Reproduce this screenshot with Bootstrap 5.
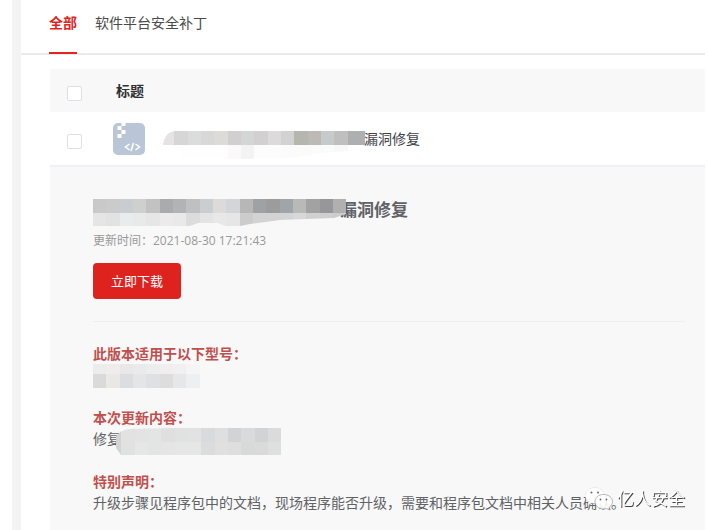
<!DOCTYPE html>
<html lang="zh-CN">
<head>
<meta charset="utf-8">
<meta name="viewport" content="width=device-width, initial-scale=1">
<title>软件平台安全补丁</title>
<link href="https://cdn.jsdelivr.net/npm/bootstrap@5.3.0/dist/css/bootstrap.min.css" rel="stylesheet">
<style>
body { font-family: "Open Sans", "Noto Sans CJK SC", sans-serif; font-size: 14px; line-height: 22px; color: #606266; background: #fff; }
.page-shell { border-left: 9px solid #f3f3f3; margin-left: 12px; margin-right: 3px; }
.page-tabs { gap: 18px; padding-left: 28px; border-bottom: 2px solid #ebebeb; }
.page-tabs .nav-link { padding: 12px 0 18px; margin-bottom: -1px; color: #4a4a4a; border-bottom: 2px solid transparent; }
.page-tabs .nav-link.active { color: #e1251f; font-weight: 700; border-color: #e1251f; }
.patch-area { padding: 14px 0 0 29px; }
.patch-table { margin: 0; color: #404246; --bs-table-bg: transparent; }
.patch-table th, .patch-table td { padding: 0; border: 0; vertical-align: middle; }
.patch-table thead tr { background: #f8f8f8; height: 43px; color: #303133; }
.patch-table tbody tr { height: 54px; border-bottom: 2px solid #f1f1f5; }
.patch-table .pick-col { width: 62px; padding-left: 17px; }
.patch-table .title-head { padding: 1px 0 0 4px; }
.form-check-input.pick { display: block; width: 15px; height: 15px; margin: 5px 0 0; border: 1px solid #dcdfe6; border-radius: 2px; background-color: #fff; }
.veil { display: block; flex: none; position: relative; z-index: 1; }
.row-veil { margin-left: 17px; margin-right: -2px; }
.patch-detail { background: #f8f8f8; padding: 32px 20px 20px 43px; min-height: calc(100vh - 166px); }
.detail-title { height: 24px; font-size: 17px; line-height: 22px; font-weight: 700; margin: 0; }
.detail-title .veil { margin-right: -6px; }
.stamp { font-size: 12px; line-height: 20px; color: #999; margin: 8px 0 12px; }
.download { font-size: 13px; line-height: 20px; color: #fff; background: #de231f; border: 0; border-radius: 4px; padding: 8px 18px; }
.download:hover { background: #c51c19; color: #fff; }
.patch-detail hr { margin: 22px 0; border: 0; border-top: 1px solid #efefef; opacity: 1; }
.section-name { font-size: 14px; line-height: 20px; font-weight: 700; color: #c0504d; margin: 0; }
.fix-veil { margin-left: -5px; }
.section-block { margin-bottom: 20px; }
.models { height: 24px; }
.watermark { position: fixed; right: 23px; bottom: 17px; z-index: 2; font-size: 17px; line-height: 28px; color: #fff; text-shadow: 1px 1px 0 #444; gap: 4px; }
</style>
<script src="https://cdn.jsdelivr.net/npm/bootstrap@5.3.0/dist/js/bootstrap.bundle.min.js"></script>
</head>
<body>
<main class="page-shell">
  <nav class="nav page-tabs">
    <a class="nav-link active" aria-current="page" href="#all">全部</a>
    <a class="nav-link" href="#platform">软件平台安全补丁</a>
  </nav>
  <div class="patch-area" id="all">
    <table class="table patch-table">
      <thead>
        <tr><th class="pick-col"><input class="form-check-input pick" type="checkbox" aria-label="全选"></th><th class="title-head">标题</th></tr>
      </thead>
      <tbody>
        <tr>
          <td class="pick-col"><input class="form-check-input pick" type="checkbox" aria-label="选择补丁"></td>
          <td>
            <div class="d-flex align-items-center">
              <svg width="34" height="34" viewBox="0 0 34 34" aria-hidden="true">
                <rect x="1" y="1" width="32" height="32" rx="5" fill="#bac6d8"/>
                <path fill="#fff" d="M9.500 0h4v4h-4zM5.500 4h4v4h-4zM9.500 8h4v4h-4zM5.500 12h4v4h-4z"/>
                <path d="M17.500 22l-4 3 4 3M23.500 22l4 3-4 3M21.500 21l-2.500 8" fill="none" stroke="#fff" stroke-width="1.500"/>
              </svg>
              <svg class="veil row-veil" width="203" height="46" viewBox="162 116 203 46" aria-hidden="true">
                <clipPath id="rowClip"><path d="M162 145Q164 131 175 131H364V145H348V151L321 153L290 158H254Q240 163 220 158H180V145z"/></clipPath>
                <g clip-path="url(#rowClip)" data-start="160" data-rows="131,14,e6e3e4 d6d6d6 dadddc d8d8d8 dcdbd8 d2cfd1 d4d6d6 d2d0d1 dddadc d1d2d1 b5b6b0 bdbab6 c6caca bfbfc0 adafb1 adafb1;145,14,ffffff fefefe fefefe fefefe fefefe fbf9fa f3f3f3 fcfcfc fcfcfc fafbfa fbfbfa fbfbfb fafbfb f8f8f8 ffffff"></g>
              </svg>
              <span>漏洞修复</span>
            </div>
          </td>
        </tr>
      </tbody>
    </table>
    <section class="patch-detail">
      <h2 class="detail-title d-flex">
        <svg class="veil" width="253" height="28" viewBox="93 198 253 28" aria-hidden="true">
          <clipPath id="headClip"><path d="M93 198H346V213L334 217L280 219L250 223L240 225H225L218 222H198L190 225H93z"/></clipPath>
          <g clip-path="url(#headClip)" data-start="93" data-rows="198,14,c9c9c9 cbcbcb c9ccd0 cfcfcf c2c2c2 aaabad b2b3b5 bfc0c2 cbced1 dddbd9 d3d5d8 b7b7b7 a0a1a3 9c9c9d a0a5aa b9b9b9 a2a2a2 979799 b0b0b0;212,13,e5e5e5 e2e2e2 e9ecec e8eaea e6e6e6 ebebeb e9e9e9 dcdcdc e4e4e4 e8e8e8 e6e6e6 cccccc d3d3d4 d3d3d3 d3d4d4 d8d8d8 d0d0d0 cfcfcf cccccc"></g>
        </svg>
        <span>漏洞修复</span>
      </h2>
      <p class="stamp">更新时间：2021-08-30 17:21:43</p>
      <button type="button" class="btn download">立即下载</button>
      <hr>
      <div class="section-block">
        <h3 class="section-name">此版本适用于以下型号：</h3>
        <div class="models">
          <svg class="veil" width="107" height="24" viewBox="93 363 107 24" aria-hidden="true">
            <g data-start="93" data-rows="363,10,ebecec f0ecec e9e7e8 eaeaec eceeee f0eeee f1eff1 f5f5f5;373,14,dadada e9e8e5 dcdde1 e3e5e6 dfe0e3 dddddd e5e7e8 eeeff0"></g>
          </svg>
        </div>
      </div>
      <div class="section-block">
        <h3 class="section-name">本次更新内容：</h3>
        <div class="d-flex models">
          <span>修复</span>
          <svg class="veil fix-veil" width="166" height="27" viewBox="115 427 166 27" aria-hidden="true">
            <clipPath id="fixClip"><path d="M115 435Q120 429 128 428L170 427H281V454H120L115 447z"/></clipPath>
            <g clip-path="url(#fixClip)" data-start="107" data-rows="427,14,d2d2d2 e2e2e2 e3e3e3 e3e5e5 dfdfdf e0e1e1 e2e2e2 d9dadb dfdfdf d2d3d5 d9dadb d1d3d5 dbdbdb;441,13,d4d4d4 e0e2e2 e6e6e6 e3e5e5 e5e5e5 e6e6e6 e5e7e7 dcdcdd e0e0e0 dedede d8dada dadada dedfdf"></g>
          </svg>
        </div>
      </div>
      <h3 class="section-name">特别声明：</h3>
      <p class="mb-0">升级步骤见程序包中的文档，现场程序能否升级，需要和程序包文档中相关人员确认。</p>
    </section>
  </div>
</main>
<div class="watermark d-flex align-items-center">
  <svg width="28" height="24" viewBox="0 0 28 24" aria-hidden="true">
    <path d="M10 .5C4.500.5.500 4 .500 8.500c0 2.500 1.200 4.500 3.200 6L3 18l3.500-2c4 1 8 .5 10.500-2 3-3 3-7 .5-10C15.800 1.500 13 .5 10 .5z" fill="#fff" stroke="#ddd" stroke-width=".5"/>
    <path d="M18.500 7.500c-5 0-8.500 3-8.500 7s3.500 7.500 8.500 7.500l3-.5 3 1.500-.5-2.500c2-1.500 3.500-3.500 3.500-6 0-4-4-7-9-7z" fill="#fff" fill-opacity=".9" stroke="#888" stroke-width=".6"/>
    <g fill="#666"><circle cx="6.500" cy="5.500" r="1"/><circle cx="13" cy="5.500" r="1"/><circle cx="15.500" cy="12.500" r=".9"/><circle cx="21.500" cy="12.500" r=".9"/></g>
  </svg>
  <span>亿人安全</span>
</div>
<script>
// Fill each veil with its rows of coloured cells: "y,height,colour colour ..."
document.querySelectorAll('[data-rows]').forEach(function (g) {
  var start = Number(g.dataset.start), step = 40 / 3;
  g.dataset.rows.split(';').forEach(function (row) {
    var p = row.split(',');
    p[2].split(' ').forEach(function (colour, i) {
      var x = Math.round(start + i * step), next = Math.round(start + (i + 1) * step);
      var r = document.createElementNS('http://www.w3.org/2000/svg', 'rect');
      r.setAttribute('x', x);
      r.setAttribute('y', p[0]);
      r.setAttribute('width', next - x);
      r.setAttribute('height', p[1]);
      r.setAttribute('fill', '#' + colour);
      g.appendChild(r);
    });
  });
});
</script>
</body>
</html>
